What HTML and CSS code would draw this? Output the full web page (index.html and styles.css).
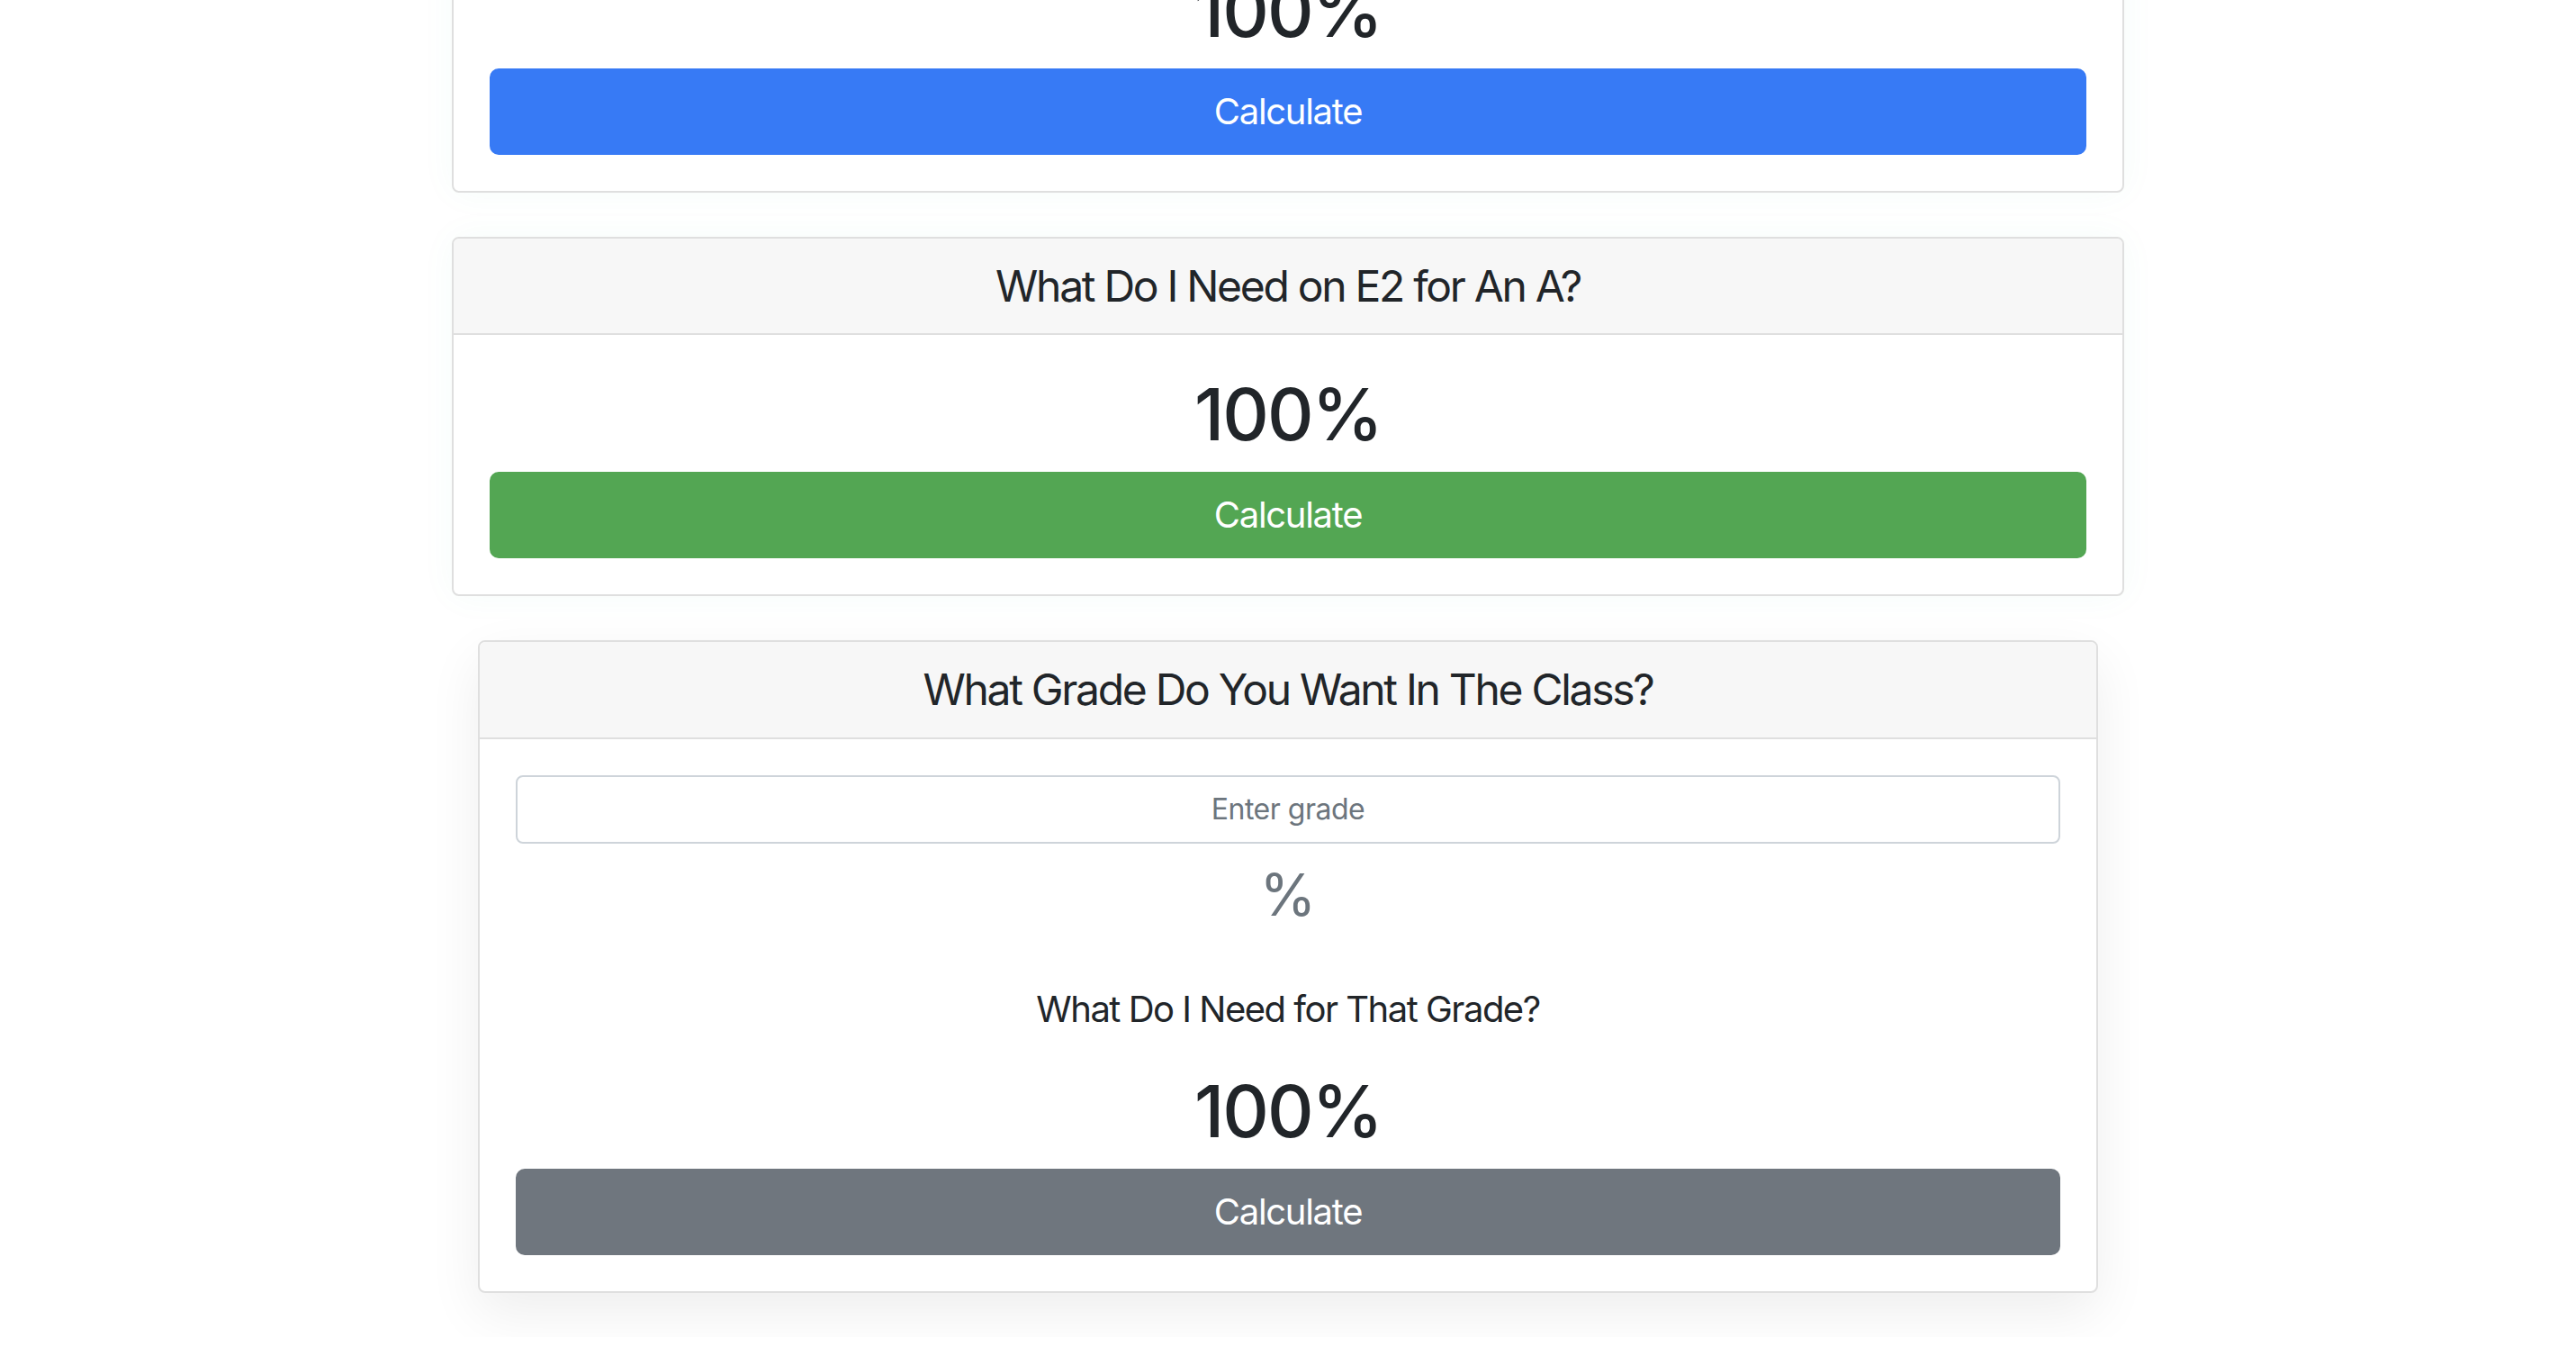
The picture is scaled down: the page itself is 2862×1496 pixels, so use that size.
FILE: index.html
```html
<!DOCTYPE html>
<html lang="en">
<head>
<meta charset="utf-8">
<title>Grade Calculator</title>
<link rel="stylesheet" href="styles.css">
</head>
<body>
<main class="page">
  <section class="card card-glow">
    <div class="card-header"><h4 class="card-title">What Do I Need on E2 for A B?</h4></div>
    <div class="card-body">
      <h1 class="result">100%</h1>
      <button class="btn btn-primary">Calculate</button>
    </div>
  </section>

  <section class="card card-glow">
    <div class="card-header"><h4 class="card-title">What Do I Need on E2 for An A?</h4></div>
    <div class="card-body">
      <h1 class="result">100%</h1>
      <button class="btn btn-success">Calculate</button>
    </div>
  </section>

  <section class="card card-narrow card-shadow">
    <div class="card-header"><h4 class="card-title">What Grade Do You Want In The Class?</h4></div>
    <div class="card-body">
      <input class="form-control" type="text" placeholder="Enter grade">
      <h2 class="percent">%</h2>
      <br>
      <h5 class="subtitle">What Do I Need for That Grade?</h5>
      <h1 class="result result-final">100%</h1>
      <button class="btn btn-secondary">Calculate</button>
    </div>
  </section>
</main>
</body>
</html>
```

FILE: styles.css
```css
* { box-sizing: border-box; }

html, body {
  margin: 0;
  padding: 0;
  background: #ffffff;
}

body {
  font-family: Inter, "Noto Sans", "Liberation Sans", sans-serif;
  font-size: 32px;
  line-height: 1.5;
  color: #212529;
  text-align: center;
  overflow: hidden;
}

.page {
  width: 1858px;
  margin: -186px auto 0;
  display: flex;
  flex-direction: column;
  align-items: center;
}

.card {
  width: 100%;
  background: #fff;
  border: 2px solid #dfdfdf;
  border-radius: 8px;
  margin-bottom: 49px;
  display: flex;
  flex-direction: column;
}

.card-narrow { width: 1800px; }

.card-glow { box-shadow: 0 0 40px rgba(0, 190, 140, 0.045); }

.card-shadow { box-shadow: 0 22px 60px rgba(0, 0, 0, 0.07); }

.card-header {
  background: #f7f7f7;
  border-bottom: 2px solid #dfdfdf;
  padding: 24px 40px;
  border-radius: 6px 6px 0 0;
}

.card-title {
  margin: 0;
  font-size: 48px;
  font-weight: 400;
  line-height: 1.2;
  letter-spacing: -2.3px;
}

.card-body {
  padding: 40px;
  display: flex;
  flex-direction: column;
}

.result {
  margin: 0 0 16px;
  font-size: 80px;
  font-weight: 500;
  line-height: 1.2;
  letter-spacing: -2px;
}

.result-final { margin-top: 41px; }

.btn {
  display: block;
  width: 100%;
  height: 96px;
  border: 2px solid transparent;
  border-radius: 10px;
  font-family: inherit;
  font-size: 40px;
  line-height: 1.5;
  color: #fff;
  padding: 0 32px;
  letter-spacing: -1.3px;
}

.btn-primary { background: #377af5; border-color: #377af5; }
.btn-success { background: #53a653; border-color: #53a653; }
.btn-secondary { background: #6f767e; border-color: #6f767e; }

.form-control {
  display: block;
  width: 100%;
  height: 76px;
  padding: 12px 24px;
  border: 2px solid #ced4da;
  border-radius: 8px;
  font-family: inherit;
  font-size: 32px;
  text-align: center;
  color: #495057;
  background: #fff;
  letter-spacing: -0.5px;
}

.form-control::placeholder { color: #6c757d; }

.percent {
  margin: 19px 0 16px;
  font-size: 64px;
  font-weight: 400;
  line-height: 1.2;
  color: #6c757d;
}

.subtitle {
  margin: 0;
  font-size: 40px;
  font-weight: 400;
  line-height: 1.2;
  letter-spacing: -1.5px;
}
```
